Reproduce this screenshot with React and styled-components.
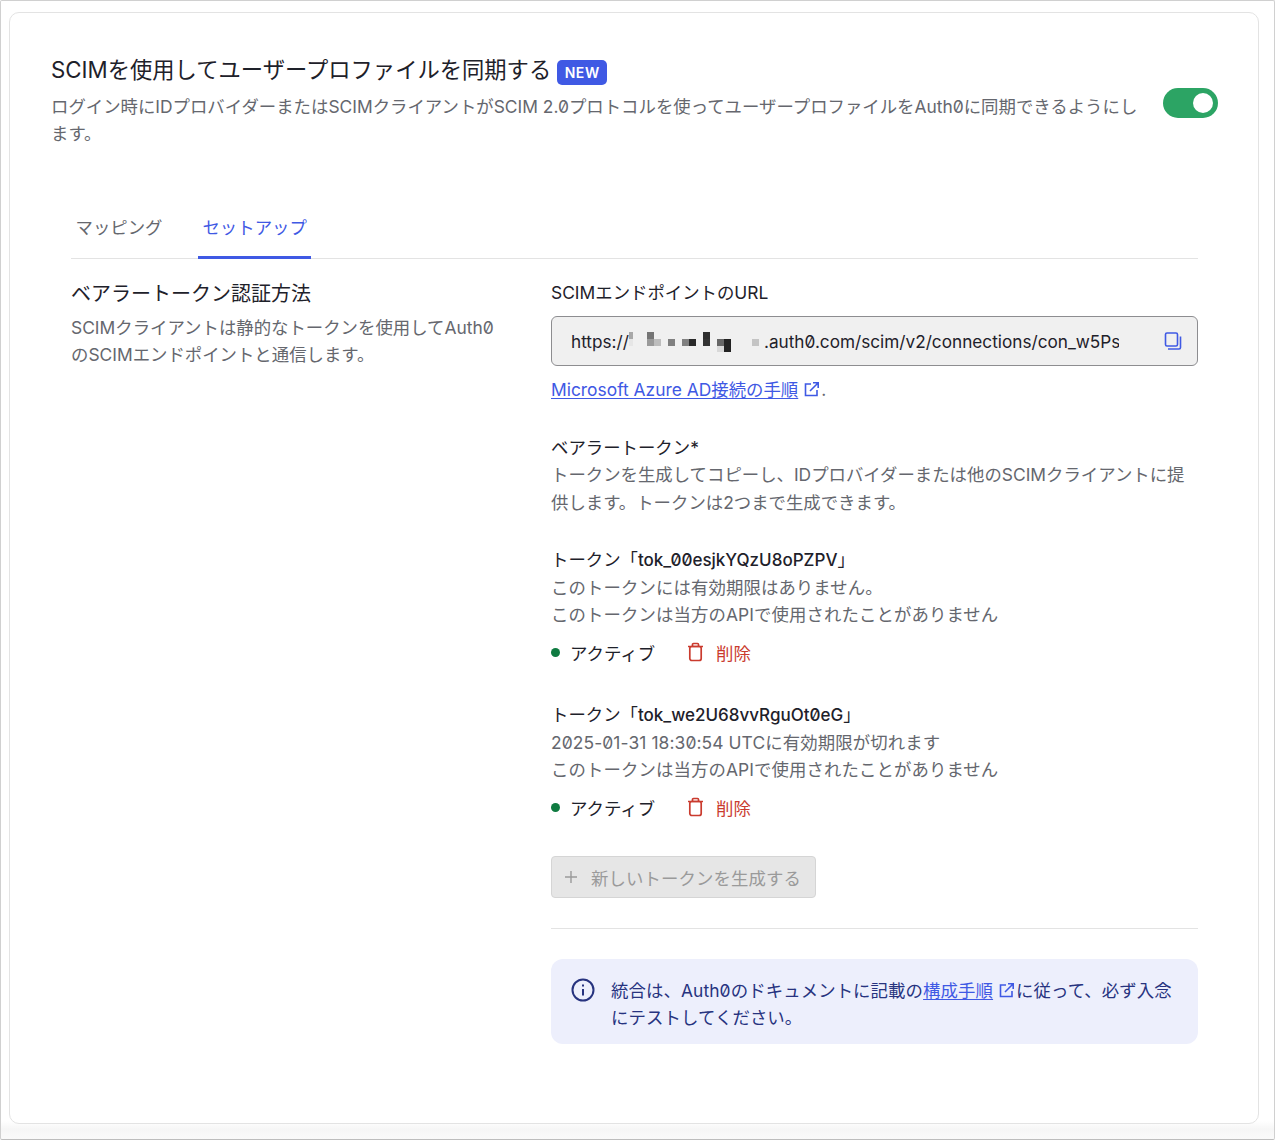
import React from 'react';
import styled, { createGlobalStyle } from 'styled-components';

const GlobalStyle = createGlobalStyle`
  html, body {
    margin: 0;
    padding: 0;
    background: #fff;
  }
  body {
    font-family: Inter, "Noto Sans CJK JP", sans-serif;
    font-feature-settings: "zero";
    font-size: 17.4px;
    color: #1e212a;
  }
  * { box-sizing: border-box; }
`;

const Frame = styled.div`
  width: 1275px;
  height: 1140px;
  border: 1px solid #d0d0d0;
  border-bottom-color: #bdbdbd;
  border-radius: 2px;
  padding: 11px 15px 13px 8px;
  background: linear-gradient(#fff 1120px, #f6f6f6 1128px, #fafafa);
`;

const Card = styled.div`
  width: 1250px;
  height: 1112px;
  background: #fff;
  border: 1px solid #e3e3e3;
  border-radius: 10px;
  padding: 40px 40px 0 41px;
`;

const Header = styled.div`
  display: flex;
  align-items: flex-start;
  justify-content: space-between;
`;

const HeaderText = styled.div`
  width: 1090px;
`;

const TitleRow = styled.div`
  display: flex;
  align-items: center;
  gap: 6px;
  height: 34px;
  margin-bottom: 6px;
`;

const Title = styled.h1`
  margin: 0;
  font-size: 22.3px;
  font-weight: 400;
  line-height: 34px;
  color: #1e212a;
`;

const Badge = styled.span`
  display: inline-flex;
  align-items: center;
  justify-content: center;
  width: 50px;
  height: 25px;
  margin-top: 5px;
  border-radius: 5px;
  background: #3f59e4;
  color: #fff;
  font-size: 14px;
  font-weight: 600;
  letter-spacing: 0.6px;
`;

const Description = styled.p`
  margin: 0;
  line-height: 27px;
  color: #65676e;
`;

const Toggle = styled.div`
  display: flex;
  justify-content: flex-end;
  align-items: center;
  width: 55px;
  height: 30px;
  margin-top: 35px;
  padding-right: 5px;
  border-radius: 15px;
  background: #2ca464;
`;

const Thumb = styled.span`
  width: 20px;
  height: 20px;
  border-radius: 50%;
  background: #fff;
`;

const Tabs = styled.div`
  display: flex;
  gap: 31px;
  width: 1127px;
  height: 58px;
  margin: 54px 0 0 20px;
  border-bottom: 1px solid #e3e3e3;
`;

const Tab = styled.div`
  display: flex;
  align-items: center;
  height: 58px;
  padding: 0 4.5px 5px;
  color: ${(p) => (p.$active ? '#3f59e4' : '#65676e')};
  border-bottom: 3px solid ${(p) => (p.$active ? '#3f59e4' : 'transparent')};
`;

const Body = styled.div`
  display: grid;
  grid-template-columns: 480px 647px;
  margin-left: 20px;
  padding-top: 20px;
`;

const SideTitle = styled.h2`
  margin: 1px 0 0;
  font-size: 20px;
  font-weight: 400;
  line-height: 28px;
`;

const SideText = styled.p`
  margin: 6px 0 0;
  width: 430px;
  line-height: 27px;
  color: #65676e;
`;

const Main = styled.div`
  display: flex;
  flex-direction: column;
`;

const Label = styled.div`
  line-height: ${(p) => p.$line || 28}px;
  color: #1e212a;
`;

const TokenName = styled.span`
  font-size: 17px;
  font-weight: 500;
`;

const Muted = styled.div`
  line-height: ${(p) => p.$line || 27}px;
  color: #65676e;
`;

const TokenLine = styled(Muted)`
  letter-spacing: 0.1px;
`;

const UrlBox = styled.div`
  display: flex;
  align-items: center;
  height: 50px;
  margin-top: 9px;
  padding: 0 15px 0 19px;
  background: #f0f0f0;
  border: 1px solid #8d8d90;
  border-radius: 6px;
  font-size: 17.2px;
`;

const UrlText = styled.div`
  display: flex;
  align-items: center;
  width: 548px;
  overflow: hidden;
  white-space: nowrap;
  margin-right: 45px;
`;

const Mosaic = styled.svg`
  flex: none;
  width: 135px;
  height: 22px;
`;

const LinkRow = styled.div`
  margin-top: 10px;
  line-height: 28px;
  color: #65676e;
`;

const TextLink = styled.a`
  color: #3f59e4;
  text-decoration: underline;
  text-underline-offset: 2px;
`;

const OutIcon = styled.svg`
  width: 17px;
  height: 17px;
  margin: 0 1px 0 5px;
  vertical-align: -2px;
  color: #3f59e4;
`;

const Section = styled.div`
  margin-top: ${(p) => p.$top}px;
`;

const StatusRow = styled.div`
  display: flex;
  align-items: center;
  height: 28px;
  margin-top: 10px;
`;

const Dot = styled.span`
  width: 9px;
  height: 9px;
  margin-right: 10px;
  border-radius: 50%;
  background: #0f7b41;
`;

const DeleteAction = styled.span`
  display: inline-flex;
  align-items: center;
  gap: 12px;
  margin-left: 32px;
  color: #ca3b2e;
`;

const GenerateButton = styled.button`
  display: flex;
  align-items: center;
  gap: 14px;
  width: 265px;
  height: 42px;
  margin-top: 35px;
  padding: 0 13px;
  background: #e6e6e6;
  border: 1px solid #d5d5d5;
  border-radius: 4px;
  color: #9a9a9a;
  font: inherit;
  letter-spacing: 0.1px;
`;

const Divider = styled.hr`
  width: 100%;
  margin: 30px 0;
  border: 0;
  border-top: 1px solid #e3e3e3;
`;

const Callout = styled.div`
  display: flex;
  gap: 16px;
  height: 85px;
  padding: 18px 20px 0;
  background: #edeffc;
  border-radius: 12px;
  color: #27337f;
`;

const CalloutText = styled.p`
  margin: 0;
  line-height: 27px;
  letter-spacing: 0.1px;
`;

const InfoIcon = styled.svg`
  flex: none;
  width: 24px;
  height: 24px;
  margin-top: 1px;
`;

const External = () => (
  <OutIcon viewBox="0 0 17 17" fill="none" stroke="currentColor" strokeWidth="1.6">
    <path d="M8 3H2.5v11.5H14V9" />
    <path d="M7 10l8-8M10 1.8h5.2V7" />
  </OutIcon>
);

const Trash = () => (
  <svg width="17" height="20" viewBox="0 0 17 20" fill="none" stroke="currentColor" strokeWidth="1.7">
    <path d="M1 4.5h15M5.5 4.5V2.5a1 1 0 0 1 1-1h4a1 1 0 0 1 1 1v2" />
    <rect x="2.8" y="4.5" width="11.4" height="14" rx="2" />
  </svg>
);

const cells = [
  [0, 2, 4, 7, '#a8a8a8'], [0, 9, 4, 7, '#e6e6e6'],
  [18, 2, 7, 7, '#757575'], [18, 9, 7, 7, '#9a9a9a'], [25, 9, 7, 7, '#bdbdbd'],
  [39, 9, 7, 7, '#808080'], [53, 9, 7, 7, '#808080'], [60, 9, 7, 7, '#2a2a2a'],
  [74, 2, 7, 7, '#2e2e2e'], [74, 9, 7, 7, '#333'],
  [88, 9, 7, 7, '#666'], [95, 9, 7, 7, '#222'], [88, 16, 7, 6, '#d8d8d8'], [95, 16, 7, 6, '#222'],
  [123, 9, 7, 7, '#c4c4c4'],
];

const Token = ({ name, expiry, top }) => (
  <Section $top={top}>
    <Label>トークン「<TokenName>{name}</TokenName>」</Label>
    <TokenLine>{expiry}</TokenLine>
    <TokenLine>このトークンは当方のAPIで使用されたことがありません</TokenLine>
    <StatusRow>
      <Dot />
      アクティブ
      <DeleteAction>
        <Trash />
        削除
      </DeleteAction>
    </StatusRow>
  </Section>
);

export default function App() {
  return (
    <>
      <GlobalStyle />
      <Frame>
        <Card>
          <Header>
            <HeaderText>
              <TitleRow>
                <Title>SCIMを使用してユーザープロファイルを同期する</Title>
                <Badge>NEW</Badge>
              </TitleRow>
              <Description>
                ログイン時にIDプロバイダーまたはSCIMクライアントがSCIM 2.0プロトコルを使ってユーザープロファイルをAuth0に同期できるようにします。
              </Description>
            </HeaderText>
            <Toggle>
              <Thumb />
            </Toggle>
          </Header>

          <Tabs>
            <Tab>マッピング</Tab>
            <Tab $active>セットアップ</Tab>
          </Tabs>

          <Body>
            <div>
              <SideTitle>ベアラートークン認証方法</SideTitle>
              <SideText>SCIMクライアントは静的なトークンを使用してAuth0のSCIMエンドポイントと通信します。</SideText>
            </div>
            <Main>
              <Label>SCIMエンドポイントのURL</Label>
              <UrlBox>
                <UrlText>
                  https://
                  <Mosaic viewBox="0 0 135 22">
                    {cells.map(([x, y, w, h, fill], i) => (
                      <rect key={i} x={x} y={y} width={w} height={h} fill={fill} />
                    ))}
                  </Mosaic>
                  .auth0.com/scim/v2/connections/con_w5PsQ
                </UrlText>
                <svg width="18" height="18" viewBox="0 0 18 18" fill="none" stroke="#3f59e4" strokeWidth="1.6">
                  <rect x="1.5" y="1" width="12" height="13" rx="1.5" />
                  <path d="M16.5 4.5V15.5a1.5 1.5 0 0 1-1.5 1.5H4" />
                </svg>
              </UrlBox>
              <LinkRow>
                <TextLink href="#">Microsoft Azure AD接続の手順</TextLink>
                <External />.
              </LinkRow>

              <Section $top={30}>
                <Label $line={27}>ベアラートークン*</Label>
                <Muted $line={28}>
                  トークンを生成してコピーし、IDプロバイダーまたは他のSCIMクライアントに提供します。トークンは2つまで生成できます。
                </Muted>
              </Section>

              <Token name="tok_00esjkYQzU8oPZPV" expiry="このトークンには有効期限はありません。" top={29} />
              <Token name="tok_we2U68vvRguOt0eG" expiry="2025-01-31 18:30:54 UTCに有効期限が切れます" top={35} />

              <GenerateButton disabled>
                <svg width="12" height="12" viewBox="0 0 12 12" stroke="#9a9a9a" strokeWidth="1.4">
                  <path d="M6 0v12M0 6h12" />
                </svg>
                新しいトークンを生成する
              </GenerateButton>

              <Divider />

              <Callout>
                <InfoIcon viewBox="0 0 24 24" fill="none" stroke="#27337f" strokeWidth="2">
                  <circle cx="12" cy="12" r="10.5" />
                  <path d="M12 11v6.5" />
                  <path d="M12 6.5v2" />
                </InfoIcon>
                <CalloutText>
                  統合は、Auth0のドキュメントに記載の<TextLink href="#">構成手順</TextLink>
                  <External />に従って、必ず入念にテストしてください。
                </CalloutText>
              </Callout>
            </Main>
          </Body>
        </Card>
      </Frame>
    </>
  );
}
